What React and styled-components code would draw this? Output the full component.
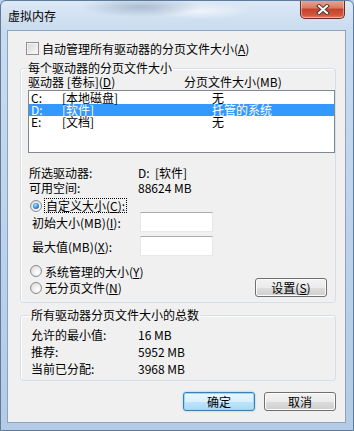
import React, { useState } from 'react';
import styled, { createGlobalStyle } from 'styled-components';

const GlobalStyle = createGlobalStyle`
  html, body {
    margin: 0;
    padding: 0;
    background: #b9cfe8;
  }
  * {
    box-sizing: border-box;
  }
`;

const drives = [
  { letter: 'C:', label: '[本地磁盘]', size: '无' },
  { letter: 'D:', label: '[软件]', size: '托管的系统' },
  { letter: 'E:', label: '[文档]', size: '无' },
];

const App = () => {
  const [selected, setSelected] = useState(1);
  const [mode, setMode] = useState('custom');

  return (
    <>
      <GlobalStyle />
      <Window>
        <TitleBar>
          <Title>虚拟内存</Title>
          <CloseButton>
            <svg width="14" height="11" viewBox="0 0 14 11">
              <path d="M3 2 L11 9 M11 2 L3 9" stroke="#4a3a3a" strokeWidth="4" strokeLinecap="square" />
              <path d="M3 2 L11 9 M11 2 L3 9" stroke="#ffffff" strokeWidth="2" strokeLinecap="square" />
            </svg>
          </CloseButton>
        </TitleBar>

        <Client>
          <CheckRow>
            <CheckBox />
            <span>自动管理所有驱动器的分页文件大小(<u>A</u>)</span>
          </CheckRow>

          <Group>
            <Legend>每个驱动器的分页文件大小</Legend>
            <HeaderRow>
              <span>驱动器 [卷标](<u>D</u>)</span>
              <span>分页文件大小(MB)</span>
            </HeaderRow>
            <ListBox>
              {drives.map((d, i) => (
                <ListRow key={d.letter} $active={i === selected} onClick={() => setSelected(i)}>
                  <span>{d.letter}</span>
                  <span>{d.label}</span>
                  <span>{d.size}</span>
                </ListRow>
              ))}
            </ListBox>

            <InfoBlock>
              <InfoRow>
                <span>所选驱动器:</span>
                <span>D:&nbsp;&nbsp;[软件]</span>
              </InfoRow>
              <InfoRow>
                <span>可用空间:</span>
                <span>88624 MB</span>
              </InfoRow>
            </InfoBlock>

            <RadioRow $top={4} $h={13} onClick={() => setMode('custom')}>
              <Radio $checked={mode === 'custom'} />
              <FocusLabel>自定义大小(<u>C</u>):</FocusLabel>
            </RadioRow>
            <SizeRow $top={0}>
              <span>初始大小(MB)(<u>I</u>):</span>
              <TextBox />
            </SizeRow>
            <SizeRow $top={4}>
              <span>最大值(MB)(<u>X</u>):</span>
              <TextBox />
            </SizeRow>
            <RadioRow $top={8} $h={14} onClick={() => setMode('system')}>
              <Radio $checked={mode === 'system'} />
              <span>系统管理的大小(<u>Y</u>)</span>
            </RadioRow>
            <LastRow>
              <RadioRow $top={0} $h={18} onClick={() => setMode('none')}>
                <Radio $checked={mode === 'none'} />
                <span>无分页文件(<u>N</u>)</span>
              </RadioRow>
              <Button $width={72}>设置(<u>S</u>)</Button>
            </LastRow>
          </Group>

          <TotalGroup>
            <Legend>所有驱动器分页文件大小的总数</Legend>
            <TotalRow>
              <span>允许的最小值:</span>
              <span>16 MB</span>
            </TotalRow>
            <TotalRow>
              <span>推荐:</span>
              <span>5952 MB</span>
            </TotalRow>
            <TotalRow>
              <span>当前已分配:</span>
              <span>3968 MB</span>
            </TotalRow>
          </TotalGroup>

          <ButtonBar>
            <Button $width={72} $default>确定</Button>
            <Button $width={72}>取消</Button>
          </ButtonBar>
        </Client>
      </Window>
    </>
  );
};

const Window = styled.div`
  width: 354px;
  height: 431px;
  display: flex;
  flex-direction: column;
  border: 1px solid #5f7b9c;
  border-radius: 6px 6px 0 0;
  background:
    radial-gradient(ellipse 60px 10px at 140px 6px, rgba(120, 140, 170, 0.45), transparent),
    radial-gradient(ellipse 50px 8px at 200px 10px, rgba(255, 255, 255, 0.6), transparent),
    linear-gradient(to bottom, #dce8f5 0px, #c9dbef 30px, #bcd1ea 60%, #b4cbe6 100%);
  font-family: "Noto Sans CJK SC", "Noto Sans", sans-serif;
  font-size: 12px;
  color: #000;
  overflow: hidden;
`;

const TitleBar = styled.div`
  height: 29px;
  display: flex;
  justify-content: space-between;
  align-items: flex-start;
  padding: 0 8px 0 7px;
`;

const Title = styled.div`
  margin-top: 7px;
  line-height: 16px;
  font-size: 12px;
  color: #000;
`;

const CloseButton = styled.div`
  width: 45px;
  height: 19px;
  margin-top: -1px;
  display: flex;
  align-items: center;
  justify-content: center;
  border: 1px solid #6a2c22;
  border-top: none;
  border-radius: 0 0 5px 5px;
  background: linear-gradient(to bottom, #e9a99a 0%, #d77a67 45%, #c2432c 50%, #d2573c 85%, #e4876a 100%);
  box-shadow: inset 0 0 0 1px rgba(255, 220, 210, 0.5);
`;

const Client = styled.div`
  margin: 0 7px 0 6px;
  height: 393px;
  background: #f0f0f0;
  border: 1px solid #8da2bd;
  padding: 11px 0 0 0;
  display: flex;
  flex-direction: column;
`;

const CheckRow = styled.div`
  display: flex;
  align-items: center;
  gap: 3px;
  height: 13px;
  padding-left: 18px;
  line-height: 13px;
`;

const CheckBox = styled.span`
  width: 13px;
  height: 13px;
  border: 1px solid #8e8f8f;
  background: linear-gradient(135deg, #d6d6d6 0%, #ececec 60%, #fdfdfd 100%);
  box-shadow: inset 0 0 0 1px #f4f4f4;
  flex: none;
`;

const Group = styled.fieldset`
  margin: 7px 0 0 12px;
  width: 316px;
  padding: 1px 0 5px 7px;
  border: 1px solid #d5dfe5;
  border-radius: 3px;
  box-shadow: inset 1px 1px 0 #fff;
  min-width: 0;
`;

const TotalGroup = styled(Group)`
  margin-top: 6px;
  padding: 5px 0 3px 10px;
`;

const Legend = styled.legend`
  padding: 0 1px;
  margin-left: -1px;
  line-height: 12px;
  height: 12px;
`;

const HeaderRow = styled.div`
  display: grid;
  grid-template-columns: 156px 1fr;
  height: 14px;
  line-height: 14px;
  white-space: nowrap;
`;

const ListBox = styled.div`
  margin-top: 1px;
  height: 63px;
  background: #fff;
  border: 1px solid #828790;
  padding: 1px 0 0 0;
`;

const ListRow = styled.div`
  display: grid;
  grid-template-columns: 31px 150px 1fr;
  height: 12px;
  line-height: 12px;
  padding-left: 2px;
  white-space: nowrap;
  background: ${(p) => (p.$active ? '#3399ff' : 'transparent')};
  color: ${(p) => (p.$active ? '#ffffff' : '#000000')};
  cursor: default;
`;

const InfoBlock = styled.div`
  margin-top: 12px;
  padding-left: 1px;
`;

const InfoRow = styled.div`
  display: grid;
  grid-template-columns: 109px 1fr;
  height: 15px;
  line-height: 15px;
  white-space: nowrap;
`;

const RadioRow = styled.div`
  display: flex;
  align-items: center;
  gap: 3px;
  margin-top: ${(p) => p.$top}px;
  height: ${(p) => p.$h}px;
  padding-left: 2px;
  white-space: nowrap;
  cursor: default;
`;

const Radio = styled.span`
  position: relative;
  width: 12px;
  height: 12px;
  flex: none;
  border-radius: 50%;
  border: 1px solid #8b8b8b;
  background: radial-gradient(circle at 65% 65%, #ffffff 0%, #e2e2e2 70%, #cfcfcf 100%);

  &::after {
    content: '';
    display: ${(p) => (p.$checked ? 'block' : 'none')};
    position: absolute;
    left: 2px;
    top: 2px;
    width: 6px;
    height: 6px;
    border-radius: 50%;
    background: radial-gradient(circle at 40% 35%, #a6e1fb 0%, #2c8ad3 55%, #15467f 100%);
  }
`;

const FocusLabel = styled.span`
  outline: 1px dotted #000;
  outline-offset: 0;
  line-height: 13px;
  padding: 0 1px;
`;

const SizeRow = styled.div`
  display: grid;
  grid-template-columns: 108px 73px;
  align-items: center;
  margin-top: ${(p) => p.$top}px;
  height: 20px;
  padding-left: 4px;
  white-space: nowrap;
`;

const TextBox = styled.div`
  height: 20px;
  background: #fff;
  border: 1px solid #e3e9ef;
  border-top-color: #abadb3;
`;

const LastRow = styled.div`
  display: flex;
  justify-content: space-between;
  align-items: center;
  padding-right: 8px;
`;

const Button = styled.button`
  width: ${(p) => p.$width}px;
  height: 19px;
  padding: 0;
  font-family: inherit;
  font-size: 12px;
  line-height: 15px;
  color: #000;
  border-radius: 3px;
  border: 1px solid ${(p) => (p.$default ? '#3c7fb1' : '#707070')};
  background: ${(p) =>
    p.$default
      ? 'linear-gradient(to bottom, #eaf6fd 0%, #d9f0fc 50%, #bee6fd 51%, #a7d9f5 100%)'
      : 'linear-gradient(to bottom, #f2f2f2 0%, #ebebeb 50%, #dddddd 51%, #cfcfcf 100%)'};
  box-shadow: ${(p) =>
    p.$default ? 'inset 0 0 0 1px #9fd5f2, 0 0 2px #6fc3f0' : 'inset 0 0 0 1px #fcfcfc'};
  cursor: default;
`;

const TotalRow = styled.div`
  display: grid;
  grid-template-columns: 107px 1fr;
  height: 17px;
  line-height: 17px;
  white-space: nowrap;
`;

const ButtonBar = styled.div`
  display: flex;
  justify-content: flex-end;
  gap: 9px;
  margin-top: 11px;
  padding-right: 9px;
`;

export default App;
